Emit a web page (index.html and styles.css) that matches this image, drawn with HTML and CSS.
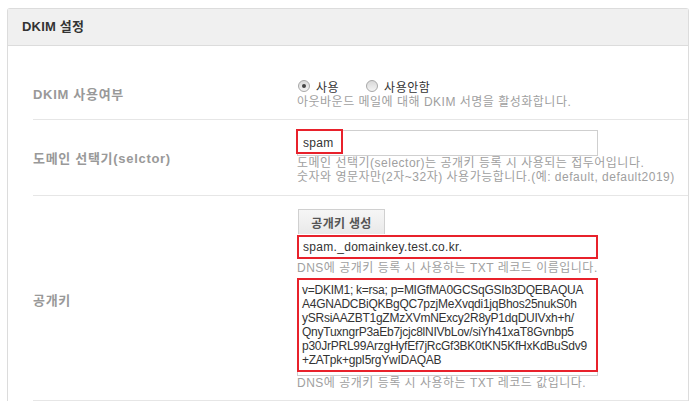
FILE: index.html
```html
<!DOCTYPE html>
<html lang="ko">

<head>
    <meta charset="UTF-8">
    <meta name="viewport" content="width=device-width, initial-scale=1.0">
    <title>DKIM 설정</title>
    <link rel="stylesheet" href="styles.css">
</head>

<body>
    <div class="panel">
        <div class="panel-head">DKIM 설정</div>
        <div class="panel-body">
            <!-- 사용여부 -->
            <div class="row row-use">
                <div class="label">DKIM 사용여부</div>
                <div class="field">
                    <div class="radios">
                        <label class="radio"><input type="radio" name="use" checked> 사용</label>
                        <label class="radio"><input type="radio" name="use"> 사용안함</label>
                    </div>
                    <p class="desc">아웃바운드 메일에 대해 DKIM 서명을 활성화합니다.</p>
                </div>
            </div>

            <!-- 선택기 -->
            <div class="row row-selector">
                <div class="label">도메인 선택기(selctor)</div>
                <div class="field">
                    <div class="mark-wrap">
                        <input type="text" class="text-input" value="spam">
                        <span class="mark mark-word"></span>
                    </div>
                    <p class="desc">도메인 선택기(selector)는 공개키 등록 시 사용되는 접두어입니다.<br>숫자와 영문자만(2자~32자) 사용가능합니다.(예: default, default2019)</p>
                </div>
            </div>

            <!-- 공개키 -->
            <div class="row row-key">
                <div class="label">공개키</div>
                <div class="field">
                    <button class="btn">공개키 생성</button>
                    <div class="mark-wrap">
                        <input type="text" class="text-input record" value="spam._domainkey.test.co.kr." readonly>
                        <span class="mark mark-full"></span>
                    </div>
                    <p class="desc desc-record">DNS에 공개키 등록 시 사용하는 TXT 레코드 이름입니다.</p>
                    <div class="mark-wrap key-wrap">
                        <textarea class="key-text" readonly>v=DKIM1; k=rsa; p=MIGfMA0GCSqGSIb3DQEBAQUA
A4GNADCBiQKBgQC7pzjMeXvqdi1jqBhos25nukS0h
ySRsiAAZBT1gZMzXVmNExcy2R8yP1dqDUIVxh+h/
QnyTuxngrP3aEb7jcjc8lNIVbLov/siYh41xaT8Gvnbp5
p30JrPRL99ArzgHyfEf7jRcGf3BK0tKN5KfHxKdBuSdv9
+ZATpk+gpI5rgYwIDAQAB</textarea>
                        <span class="mark mark-key"></span>
                    </div>
                    <p class="desc">DNS에 공개키 등록 시 사용하는 TXT 레코드 값입니다.</p>
                </div>
            </div>
        </div>
    </div>
</body>

</html>
```

FILE: styles.css
```css
body {
    margin: 0;
    padding: 8px 0 0 7px;
    font-family: "Liberation Sans", "Noto Sans CJK KR", sans-serif;
    font-size: 12px;
    color: #333;
    background: #fff;
}

.panel {
    width: 680px;
    border: 1px solid #dcdcdc;
    border-bottom: none;
    border-radius: 3px 3px 0 0;
}

.panel-head {
    height: 36px;
    line-height: 36px;
    padding-left: 14px;
    background-color: #f0f0f0;
    border-bottom: 1px solid #dcdcdc;
    font-size: 13px;
    font-weight: bold;
    color: #333;
    letter-spacing: 0.2px;
}

.panel-body {
    padding: 20px 0 0 25px;
}

.row {
    display: flex;
    align-items: center;
    border-bottom: 1px solid #e6e6e6;
}

.label {
    width: 264px;
    flex-shrink: 0;
    font-size: 13px;
    font-weight: bold;
    color: #999;
    letter-spacing: 0.7px;
}

.field {
    flex: 1;
}

.desc {
    margin: 0;
    line-height: 14px;
    color: #a0a0a0;
    letter-spacing: 0.5px;
    white-space: nowrap;
}

.desc-record {
    margin: 2px 0 3px;
}

.row-use {
    padding: 12px 0 10px;
}

.row-selector {
    padding: 10px 0 11px;
}

.row-key {
    padding: 13px 0 10px;
}

/* 라디오 버튼 */
.radios {
    display: flex;
    height: 16px;
    align-items: center;
    margin-bottom: 1px;
}

.radio {
    display: flex;
    align-items: center;
    margin-right: 26px;
    color: #333;
    letter-spacing: 0.5px;
}

.radio input {
    appearance: none;
    -webkit-appearance: none;
    width: 12px;
    height: 12px;
    margin: 0 6px 0 1px;
    border: 1px solid #a8a8a8;
    border-radius: 50%;
    background: linear-gradient(#d8d8d8, #f4f4f4);
    position: relative;
}

.radio input:checked::after {
    content: "";
    position: absolute;
    left: 3px;
    top: 3px;
    width: 4px;
    height: 4px;
    border-radius: 50%;
    background: #444;
}

/* 입력 필드 */
.mark-wrap {
    position: relative;
    width: 301px;
}

.text-input {
    display: block;
    box-sizing: border-box;
    width: 301px;
    height: 26px;
    margin: 0;
    padding: 0 5px;
    border: 1px solid #cfcfcf;
    font-family: "Liberation Sans", "Noto Sans CJK KR", sans-serif;
    font-size: 12px;
    color: #333;
    letter-spacing: 0.3px;
    outline: none;
}

.record {
    height: 24px;
    margin-top: 1px;
}

.btn {
    display: block;
    width: 87px;
    height: 25px;
    margin-left: 1px;
    padding: 0;
    border: 1px solid #d0d0d0;
    border-bottom: none;
    background: linear-gradient(#f6f6f6, #e9e9e9);
    font-family: "Liberation Sans", "Noto Sans CJK KR", sans-serif;
    font-size: 12px;
    font-weight: bold;
    color: #555;
    letter-spacing: 0.3px;
}

.key-text {
    display: block;
    box-sizing: border-box;
    width: 301px;
    height: 98px;
    margin: 0;
    padding: 4px 4px 8px;
    border: 1px solid #cfcfcf;
    font-family: "Liberation Sans", "Noto Sans CJK KR", sans-serif;
    font-size: 12px;
    line-height: 14px;
    color: #333;
    letter-spacing: -0.25px;
    resize: none;
    overflow: hidden;
    white-space: pre;
}

/* 빨간 강조 박스 */
.mark {
    position: absolute;
    border: 2px solid #e8212b;
    pointer-events: none;
}

.mark-word {
    left: -1px;
    top: -1px;
    width: 43px;
    height: 21px;
}

.mark-full {
    left: 0;
    top: 0;
    right: 0;
    bottom: 0;
}

.mark-key {
    left: 0;
    top: 0;
    right: 0;
    bottom: 4px;
}
```
